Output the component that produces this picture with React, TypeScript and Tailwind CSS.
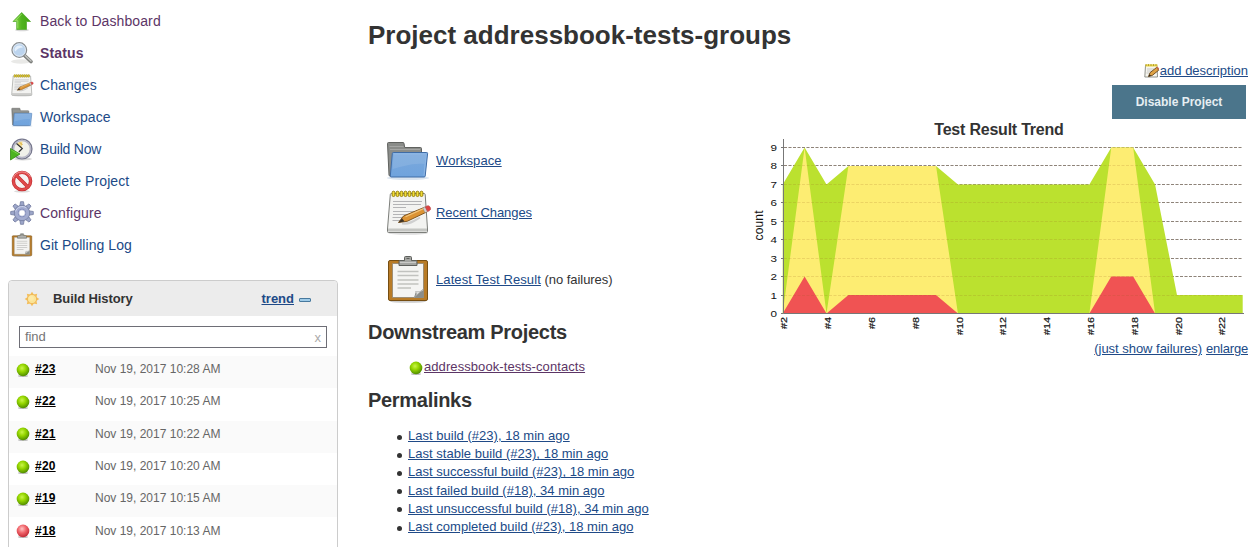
import React from 'react';

type IconProps = { className?: string };

function FolderIcon({ className = 'size-6' }: IconProps) {
  return (
    <svg viewBox="0 0 48 48" className={className}>
      <defs>
        <linearGradient id="folder-front" x1="0" y1="0" x2="0" y2="1">
          <stop offset="0" stopColor="#7ca9dc" />
          <stop offset="1" stopColor="#6fa3dd" />
        </linearGradient>
      </defs>
      <ellipse cx="24" cy="42" rx="21" ry="2" fill="#dbe5f0" />
      <path d="M3.5 7.5q0-1 1-1h14.5q1 0 1 1l.7 4H36.500q1 0 1 1V40H6q-1 0-1-1z" fill="#8a8c89" stroke="#60625f" />
      <path d="M5.500 10.500h14M6 13.500h30" stroke="#a5a6a4" />
      <path d="M9.300 16.500h33.400q1 0 .9 1l-2.400 22.500q-.1 1-1.100 1H7.200q-1 0-.9-1l2-22.500q.1-1 1-1z" fill="url(#folder-front)" stroke="#3f6ca6" />
      <path d="M9.600 17.700h32.600L40 39.800" fill="none" stroke="#8fb8e6" />
      <path d="M9.500 18h32l-1 10c-14-1-22 3-32 5z" fill="#fff" opacity=".1" />
    </svg>
  );
}

function NotepadIcon({ className = 'size-6' }: IconProps) {
  return (
    <svg viewBox="0 0 48 48" className={className}>
      <ellipse cx="24" cy="45" rx="20" ry="1.800" fill="#dedede" />
      <path d="M7.500 5.500h32.500q1 0 1.200 1L43.500 41v2.500q0 1-1 1H4.500q-1 0-1-1V41L6.300 6.500q.1-1 1.200-1z" fill="#f3f3f1" stroke="#7c7e7a" />
      <path d="M4 40.500h39v3H4z" fill="#c4c5c2" />
      <path d="M9 13.500h29M9 16.500h28M9 19.500h13M9 23.500h21M9 26.500h15M8.500 29.500h11M8.500 32.500h8" stroke="#b4b4b6" />
      <g fill="#f1dc37" stroke="#8b7600" strokeWidth=".9">
        {[9.5, 13.5, 17.5, 21.5, 25.5, 29.5, 33.5, 37.5].map((x) => (
          <rect key={x} x={x - 1.4} y="3.200" width="2.800" height="5.300" rx="1.300" />
        ))}
      </g>
      <path d="M18 35.500c8 1 13-3 18-6" stroke="#cfcfcf" strokeWidth="2" fill="none" />
      <path d="M14.500 34.500l5-6.500L40.500 19.300l2.200 4.700-19.500 9.300z" fill="#dc9334" stroke="#754b16" strokeWidth=".9" />
      <path d="M21.500 28.800l19-8.700" stroke="#f3c47a" strokeWidth="1.200" />
      <path d="M14.500 34.500l3.500-4.300 2.500 3.200z" fill="#3d3226" />
      <path d="M38.800 20l2.500-1.200 2.400 4.700-2.700 1.300z" fill="#cfcfcf" stroke="#8b7c70" strokeWidth=".4" />
      <path d="M41.300 18.800l2-.9c2.500-1 4.600 3.400 2.200 4.700l-1.900 1z" fill="#df4242" stroke="#b94b4b" strokeWidth=".7" />
    </svg>
  );
}

function EditIcon() {
  return (
    <svg viewBox="0 0 16 16" className="size-4">
      <path d="M1.500 2.500h11.500l.5 11.500H.8z" fill="#f6f6ef" stroke="#85867f" strokeWidth=".9" />
      <path d="M1.500 1.300h12v2.200h-12z" fill="#ead54a" />
      <path d="M2 1v2M4.500 1v2M7 1v2M9.500 1v2M12 1v2" stroke="#a08c18" strokeWidth=".7" />
      <path d="M3 6h7M3 8h5M2.500 10h3" stroke="#bdbdbd" strokeWidth=".8" />
      <path d="M4.500 13.500l1.500-3.800 6.500-5.200 2.300 2.600-6.500 5.300z" fill="#dfa244" stroke="#67451b" strokeWidth=".9" />
      <path d="M4.500 13.500l1-2.300 1.500 1.500z" fill="#30271f" />
      <path d="M12.200 4.600l1.300-.8 1.700 1.800-.8 1.300z" fill="#cb6b51" />
    </svg>
  );
}

function ClipboardIcon({ className = 'size-6' }: IconProps) {
  return (
    <svg viewBox="0 0 48 48" className={className}>
      <ellipse cx="24" cy="46.500" rx="18" ry="1.300" fill="#ccc" />
      <rect x="4.500" y="5.500" width="39" height="40" rx="1.500" fill="#b87b26" stroke="#764e12" />
      <path d="M8.500 8.500h31v34h-31z" fill="#f4f4f2" stroke="#8f8470" strokeWidth=".8" />
      <path d="M13.500 16.500h21M13.500 20.500h21M13.500 25h21M13.500 29h21M13.500 33h13.500" stroke="#c1c2bf" strokeWidth="1.500" />
      <path d="M30 43l1.500-5.500q5 0 8-2.500v8z" fill="#8b8d89" />
      <path d="M30 42.500q4-3 1.500-6 5 1.500 8-2.500z" fill="#dfdfdd" stroke="#a2a3a0" strokeWidth=".6" />
      <path d="M16 5.500h4.500v-3q0-1 1-1h5q1 0 1 1v3H32q1 0 1 1v4H15v-4q0-1 1-1z" fill="#a4a5a2" stroke="#5e605d" />
      <path d="M16 7.500h16" stroke="#cacac8" />
      <path d="M22.500 3.500h3" stroke="#5e605d" />
    </svg>
  );
}

function UpIcon() {
  return (
    <svg viewBox="0 0 24 24" className="size-6">
      <defs>
        <linearGradient id="up-fill">
          <stop offset="0" stopColor="#8ed94a" />
          <stop offset=".5" stopColor="#4fb31e" />
          <stop offset="1" stopColor="#41a310" />
        </linearGradient>
      </defs>
      <ellipse cx="12" cy="21" rx="7" ry="1.300" fill="#d8d8d8" />
      <path d="M11.700 3.500L3 12.500h3.700v8h9.800v-8h4z" fill="url(#up-fill)" stroke="#58ad35" strokeWidth=".8" strokeLinejoin="round" />
      <path d="M11.700 5L5.500 11.700h2.300v7.500" fill="none" stroke="#a6e573" strokeWidth=".7" />
    </svg>
  );
}

function SearchIcon() {
  return (
    <svg viewBox="0 0 24 24" className="size-6">
      <ellipse cx="11" cy="20.500" rx="10" ry="2.200" fill="#e9e9e7" />
      <path d="M14.500 14.500l6.500 6" stroke="#7c7e7b" strokeWidth="3.600" strokeLinecap="round" />
      <path d="M15 14.500l6 5.500" stroke="#c2c3c0" strokeWidth="1.500" strokeLinecap="round" />
      <circle cx="9.300" cy="9" r="7.300" fill="#bcd4ee" stroke="#8b8e90" strokeWidth="1.300" />
      <circle cx="9.300" cy="9" r="6.200" fill="none" stroke="#e7edf4" strokeWidth=".8" />
      <path d="M4.500 9q.3-4.300 5-4.500 2.500 0 3.500 2-5 0-7.500 4z" fill="#e5f0fb" />
    </svg>
  );
}

function BuildIcon() {
  return (
    <svg viewBox="0 0 24 24" className="size-6">
      <ellipse cx="13" cy="22" rx="9" ry="1.500" fill="#d8d8d8" />
      <circle cx="12" cy="12" r="9.900" fill="#f1f1ea" stroke="#76778d" strokeWidth="1.400" />
      <circle cx="12" cy="12" r="8.500" fill="none" stroke="#b6b6c6" strokeWidth="1.600" />
      <path d="M11.500 11L7 6.500A7 7 0 0 1 12.500 4.500z" fill="#f1d98b" />
      <path d="M6.500 6.500l5.800 5-3.500 3.500" fill="none" stroke="#343434" strokeWidth="1.200" />
      <path d="M10 5.500l2.500 2.500" stroke="#d9a72c" />
      <path d="M.5 11.500L10 17 .5 23z" fill="#4db421" stroke="#338b14" strokeWidth=".8" />
      <path d="M1.300 13l7 4" stroke="#84d951" strokeWidth=".8" />
    </svg>
  );
}

function DeleteIcon() {
  return (
    <svg viewBox="0 0 24 24" className="size-6">
      <ellipse cx="12" cy="22.300" rx="8" ry="1.300" fill="#dcdcdc" />
      <circle cx="12" cy="12" r="8.600" fill="#f7f3f3" stroke="#c02a2c" strokeWidth="3.400" />
      <path d="M6.300 6.300l11.400 11.400" stroke="#c42c2e" strokeWidth="3.400" />
      <circle cx="12" cy="12" r="8.600" fill="none" stroke="#e04a4c" strokeWidth="2.200" />
      <path d="M5.800 5.800l12.400 12.400" stroke="#e04a4c" strokeWidth="2.200" />
      <path d="M3 9.500q2-6.500 9-6.600 6 .2 8.500 5" stroke="#f3a3a3" strokeWidth=".8" fill="none" />
    </svg>
  );
}

function GearIcon() {
  return (
    <svg viewBox="0 0 24 24" className="size-6">
      <g fill="#9ca6c9" stroke="#747ca0" strokeWidth=".8">
        {[0, 45, 90, 135, 180, 225, 270, 315].map((a) => (
          <path key={a} d="M9.700 6l.8-5.300h3l.8 5.300z" transform={`rotate(${a} 12 12)`} />
        ))}
        <circle cx="12" cy="12" r="7.700" />
      </g>
      <circle cx="12" cy="12" r="7" fill="#a3acd0" />
      <path d="M5.500 10.500a7 7 0 0 1 11-3.500" stroke="#ced4ec" fill="none" />
      <circle cx="12" cy="12" r="4.200" fill="#7d89b8" />
      <circle cx="12" cy="12" r="3.100" fill="#fff" stroke="#c7cce2" strokeWidth=".8" />
    </svg>
  );
}

function SunIcon() {
  return (
    <svg viewBox="0 0 16 16" className="size-4">
      <g fill="#f4be58">
        {[0, 45, 90, 135, 180, 225, 270, 315].map((a) => (
          <path key={a} d="M5.600 4.500L8 .7l2.400 3.800z" transform={`rotate(${a} 8 8)`} />
        ))}
      </g>
      <circle cx="8" cy="8" r="4.600" fill="#fbe496" stroke="#eeb355" strokeWidth=".8" />
      <circle cx="7.300" cy="7.300" r="2.500" fill="#fdeaa6" />
    </svg>
  );
}

function Ball({ failed = false, className = '' }: { failed?: boolean; className?: string }) {
  return (
    <svg viewBox="0 0 14 14" className={`size-3.5 shrink-0 ${className}`}>
      <defs>
        <radialGradient id="ball-ok" cx=".42" cy=".36" r=".65">
          <stop offset="0" stopColor="#c9f54a" />
          <stop offset=".45" stopColor="#95d600" />
          <stop offset="1" stopColor="#4f8b00" />
        </radialGradient>
        <radialGradient id="ball-bad" cx=".42" cy=".34" r=".65">
          <stop offset="0" stopColor="#ffc4c4" />
          <stop offset=".5" stopColor="#f0646a" />
          <stop offset="1" stopColor="#c42d38" />
        </radialGradient>
      </defs>
      <ellipse cx="7" cy="12.900" rx="5" ry="1" fill="#bcbcbc" />
      <circle cx="7" cy="6.900" r="6.300" fill={failed ? 'url(#ball-bad)' : 'url(#ball-ok)'} />
    </svg>
  );
}

const tasks = [
  { label: 'Back to Dashboard', icon: <UpIcon />, tone: 'tracking-[0.1px] text-[#5c3566]' },
  { label: 'Status', icon: <SearchIcon />, tone: 'font-bold tracking-[0.15px] text-[#5c3566]' },
  { label: 'Changes', icon: <NotepadIcon />, tone: 'tracking-[0.1px] text-[#204a87]' },
  { label: 'Workspace', icon: <FolderIcon />, tone: 'tracking-[0.1px] text-[#204a87]' },
  { label: 'Build Now', icon: <BuildIcon />, tone: 'tracking-[-0.2px] text-[#204a87]' },
  { label: 'Delete Project', icon: <DeleteIcon />, tone: 'tracking-[0.1px] text-[#204a87]' },
  { label: 'Configure', icon: <GearIcon />, tone: 'tracking-[0.1px] text-[#5c3566]' },
  { label: 'Git Polling Log', icon: <ClipboardIcon />, tone: 'tracking-[0.05px] text-[#204a87]' },
];

const builds = [
  { id: 23, time: '10:28' },
  { id: 22, time: '10:25' },
  { id: 21, time: '10:22' },
  { id: 20, time: '10:20' },
  { id: 19, time: '10:15' },
  { id: 18, time: '10:13', failed: true },
];

const permalinks = [
  'Last build (#23), 18 min ago',
  'Last stable build (#23), 18 min ago',
  'Last successful build (#23), 18 min ago',
  'Last failed build (#18), 34 min ago',
  'Last unsuccessful build (#18), 34 min ago',
  'Last completed build (#23), 18 min ago',
];

const FIRST = 2;
const LAST = 23;
const total = [7, 9, 7, 8, 8, 8, 8, 8, 7, 7, 7, 7, 7, 7, 7, 9, 9, 7, 1, 1, 1, 1];
const skipped = [0, 9, 0, 8, 8, 8, 8, 8, 0, 0, 0, 0, 0, 0, 0, 9, 9, 0, 0, 0, 0, 0];
const failed = [0, 2, 0, 1, 1, 1, 1, 1, 0, 0, 0, 0, 0, 0, 0, 2, 2, 0, 0, 0, 0, 0];

const px = (build: number) => 34.7 + ((build - FIRST) * 460) / (LAST - FIRST);
const py = (count: number) => 174.5 - count * 18.44;
const area = (series: number[]) =>
  [`${px(FIRST)},${py(0)}`, ...series.map((v, i) => `${px(FIRST + i)},${py(v)}`), `${px(LAST)},${py(0)}`].join(' ');

function TrendChart() {
  const counts = [0, 1, 2, 3, 4, 5, 6, 7, 8, 9];
  const labels = [2, 4, 6, 8, 10, 12, 14, 16, 18, 20, 22];
  return (
    <svg width="500" height="201" viewBox="0 0 500 201" className="block font-['Liberation_Sans',Arial,sans-serif]">
      {counts.slice(1).map((c) => (
        <path key={c} d={`M36 ${Math.round(py(c) - 0.5) + 0.5}H495`} stroke="#8c8c8c" strokeDasharray="3 1.5" />
      ))}
      <polygon points={area(total)} fill="#bbe12f" />
      <polygon points={area(skipped)} fill="#fded72" />
      <polygon points={area(failed)} fill="#f05353" />
      {counts.slice(1).map((c) => (
        <path key={c} d={`M36 ${Math.round(py(c) - 0.5) + 0.5}H495`} stroke="#9a5a20" strokeOpacity=".17" strokeDasharray="3 1.5" />
      ))}
      <path d="M35.500 0V174.500H496" fill="none" stroke="#777" />
      {counts.map((c) => (
        <g key={c}>
          <path d={`M33 ${Math.round(py(c) - 0.5) + 0.5}h2`} stroke="#777" />
          <text x="29" y={py(c) + 3.5} textAnchor="end" fontSize="9.500" textLength="6.500" lengthAdjust="spacingAndGlyphs" fill="#111">{c}</text>
        </g>
      ))}
      {labels.map((b) => (
        <g key={b}>
          <text transform={`translate(${px(b) + 4.6} 178) rotate(-90)`} textAnchor="end" fontSize="9.500" fill="#111" stroke="#111" strokeWidth=".2" textLength={b < 10 ? 12 : 18} lengthAdjust="spacingAndGlyphs">#{b}</text>
        </g>
      ))}
      <text transform="translate(15 86.500) rotate(-90)" textAnchor="middle" fontSize="12" textLength="30" fill="#111">count</text>
    </svg>
  );
}

const link = 'text-[#204a87] underline';

export default function App() {
  return (
    <div className="flex h-[547px] w-[1255px] overflow-hidden bg-white font-['Liberation_Sans',Arial,sans-serif] text-[13px] text-[#333]">
      <aside className="ml-2 w-[330px] shrink-0 pt-[5px]">
        <nav className="pl-0.5 text-sm">
          {tasks.map((t) => (
            <a key={t.label} className={`flex h-8 items-center gap-1.5 ${t.tone}`}>
              {t.icon}
              <span>{t.label}</span>
            </a>
          ))}
        </nav>
        <section className="mt-[19px] h-[300px] rounded-t border border-[#ccc] bg-white">
          <header className="flex h-[35px] items-center rounded-t bg-[#ececec] px-[15px] font-bold">
            <SunIcon />
            <h2 className="ml-[13px] flex-1 tracking-[-0.1px]">Build History</h2>
            <a className={link}>trend</a>
            <span className="mt-0.5 mr-[11px] ml-[5px] h-1 w-3 rounded-[1px] border border-[#47799e] bg-[#9fcbe8]" />
          </header>
          <div className="mx-2.5 mt-2.5 mb-2 flex h-[22px] items-center justify-between border border-[#6e6e76] px-[5px] text-[#757575]">
            <span className="text-[13px] tracking-[-0.1px]">find</span>
            <span className="mt-0.5 text-[#aaa]">x</span>
          </div>
          {builds.map((b, i) => (
            <div key={b.id} className={`flex h-[32.300px] items-center pb-[6px] pl-[7px] ${i % 2 ? 'bg-white' : 'bg-[#fafafa]'}`}>
              <Ball failed={b.failed} className="mt-px" />
              <a className="ml-[5px] w-[60px] text-xs font-bold tracking-[0.2px] text-black underline">#{b.id}</a>
              <span className="text-xs text-[#666]">Nov 19, 2017 {b.time} AM</span>
            </div>
          ))}
        </section>
      </aside>

      <main className="ml-[30px] w-[880px] shrink-0">
        <h1 className="pt-5 text-[26px] leading-[30px] font-bold whitespace-nowrap">Project addressbook-tests-groups</h1>
        <div className="flex justify-between">
          <div className="w-[360px] shrink-0 pt-[86px]">
            <div className="flex flex-col pl-4">
              <div className="flex h-[52px] items-start gap-1">
                <FolderIcon className="size-12" />
                <a className={`mt-[15px] tracking-[0.1px] ${link}`}>Workspace</a>
              </div>
              <div className="flex h-[67px] items-start gap-1">
                <NotepadIcon className="size-12" />
                <a className={`mt-[15px] tracking-[-0.06px] ${link}`}>Recent Changes</a>
              </div>
              <div className="flex h-12 items-start gap-1">
                <ClipboardIcon className="size-12" />
                <p className="mt-[15px]"><a className={`tracking-[0.1px] ${link}`}>Latest Test Result</a> <span className="tracking-[-0.05px]">(no failures)</span></p>
              </div>
            </div>
            <h2 className="mt-[17px] text-xl leading-6 font-bold tracking-[-0.3px]">Downstream Projects</h2>
            <div className="mt-[13px] flex h-5 items-center pl-[41px]">
              <Ball className="mt-0.5" />
              <a className="ml-px tracking-[0.08px] text-[#5c3566] underline">addressbook-tests-contacts</a>
            </div>
            <h2 className="mt-[11px] text-xl leading-6 font-bold tracking-[-0.3px]">Permalinks</h2>
            <ul className="mt-[15px] pl-[29px] leading-[18.200px]">
              {permalinks.map((p) => (
                <li key={p} className="flex items-center gap-1.5 tracking-[0.02px]">
                  <span className="mt-0.5 size-[5px] rounded-full bg-[#333]" />
                  <a className={link}>{p}</a>
                </li>
              ))}
            </ul>
          </div>

          <div className="flex w-[500px] shrink-0 flex-col items-end pt-[13px]">
            <div className="flex h-4 items-center">
              <EditIcon />
              <a className={link}>add description</a>
            </div>
            <button className="mt-1.5 mr-0.5 h-[34px] w-[134px] bg-[#4b758b] text-xs font-bold text-[#e6eef2]">Disable Project</button>
            <h3 className="mt-0.5 w-full pl-0.5 text-center text-base leading-[18px] font-bold tracking-[-0.22px]">Test Result Trend</h3>
            <TrendChart />
            <p className="flex gap-1 leading-[18px]">
              <a className={`tracking-[-0.03px] ${link}`}>(just show failures)</a>
              <a className={`tracking-[-0.2px] ${link}`}>enlarge</a>
            </p>
          </div>
        </div>
      </main>
    </div>
  );
}
